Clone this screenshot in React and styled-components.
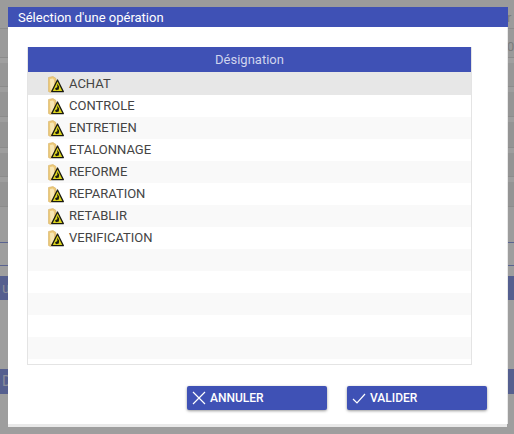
import React from 'react';
import styled, { createGlobalStyle } from 'styled-components';

const GlobalStyle = createGlobalStyle`
  html, body {
    margin: 0;
    padding: 0;
    height: 100%;
    background: #9e9e9e;
    font-family: Roboto, "Liberation Sans", sans-serif;
    overflow: hidden;
  }
`;

const operations = ['ACHAT', 'CONTROLE', 'ENTRETIEN', 'ETALONNAGE', 'REFORME', 'REPARATION', 'RETABLIR', 'VERIFICATION'];
const EMPTY_ROWS = 5;

const backdropRows = [
  { h: 29, bg: '#9b9b9b', right: 'r' },
  { h: 29, bg: '#9a9a9a', right: '0' },
  { h: 29, bg: '#979797', strip: '#a0a0a0' },
  { h: 30, bg: '#959595', strip: '#9e9e9e' },
  { h: 31, bg: '#949494', strip: '#9e9e9e' },
  { h: 29, bg: '#949494', strip: '#9e9e9e' },
  { h: 30, bg: '#949494', strip: '#9e9e9e' },
  { h: 36, bg: '#9c9c9c', line: '#5a6390' },
  { h: 23, bg: '#9e9e9e', line: '#5a6390' },
  { h: 10, bg: '#9e9e9e', line: '#9e9e9e' },
  { h: 24, bg: '#555f8f', line: '#555f8f', left: 'u' },
  { h: 69, bg: '#9e9e9e', line: '#9e9e9e' },
  { h: 25, bg: '#555f8f', line: '#555f8f', left: 'D' },
];

const Page = styled.div`
  position: relative;
  width: 514px;
  height: 434px;
  overflow: hidden;
`;

const Backdrop = styled.div`
  display: flex;
  flex-direction: column;
`;

const BackdropRow = styled.div`
  display: flex;
  align-items: center;
  justify-content: space-between;
  box-sizing: border-box;
  height: ${p => p.$h}px;
  background: ${p => p.$bg};
  border-top: ${p => (p.$strip ? `5px solid ${p.$strip}` : '0')};
  border-bottom: 1px solid ${p => p.$line || '#8c8c8c'};
  color: #8a8d99;
  font-size: 14px;
  padding: 0 0 0 2px;
`;

const RightCell = styled.span`
  color: #7c7c7c;
  font-size: 13px;
  width: 7px;
  padding-top: 6px;
`;

const Dialog = styled.div`
  position: absolute;
  top: 7px;
  left: 8px;
  width: 499px;
  height: 417px;
  background: #fff;
  box-shadow: 0 3px 0 #e9e9e9, 1px 0 0 #e9e9e9;
  display: flex;
  flex-direction: column;
`;

const TitleBar = styled.div`
  height: 20px;
  width: 500px;
  flex: none;
  background: #3f51b5;
  color: #fff;
  font-size: 13px;
  line-height: 21px;
  padding-left: 10px;
  box-sizing: border-box;
`;

const Content = styled.div`
  flex: 1;
  display: flex;
  flex-direction: column;
  padding: 20px 20px 14px 19px;
`;

const Table = styled.div`
  width: 445px;
  height: 318px;
  box-sizing: border-box;
  border: 1px solid #e4e4e4;
  border-top: 0;
  display: flex;
  flex-direction: column;
  overflow: hidden;
`;

const TableHead = styled.div`
  height: 25px;
  flex: none;
  background: #3f51b5;
  color: #cfd4ee;
  font-size: 13px;
  line-height: 25px;
  text-align: center;
`;

const Row = styled.div`
  height: ${p => (p.$selected ? 23 : 22)}px;
  flex: none;
  display: flex;
  align-items: center;
  gap: 5px;
  padding-left: 20px;
  padding-top: ${p => (p.$selected ? 1 : 0)}px;
  box-sizing: border-box;
  background: ${p => (p.$selected ? '#e7e7e7' : p.$odd ? '#f9f9f9' : '#fff')};
  color: #444;
  font-size: 13px;
`;

const RowLabel = styled.span`
  margin-bottom: 2px;
`;

const Actions = styled.div`
  margin-top: 21px;
  display: flex;
  justify-content: flex-end;
  gap: 20px;
`;

const Button = styled.button`
  width: 140px;
  height: 24px;
  display: flex;
  align-items: center;
  gap: 4px;
  padding: 0 0 0 5px;
  border: 0;
  border-radius: 2px;
  background: #3f51b5;
  color: #fff;
  font-family: inherit;
  font-size: 12px;
  font-weight: 500;
  box-shadow: 0 1px 3px rgba(0, 0, 0, 0.4);
`;

const FolderWarning = () => (
  <svg width="16" height="17" viewBox="0 0 16 17">
    <path d="M0.5 1.5 L5 0.5 L8 2.5 L8 13 L2.5 16.5 L0.5 15.5 Z" fill="#ecc878" stroke="#d6b468" strokeWidth="0.6" />
    <path d="M2 3 L5 2.5 L6 4 L6 12 L2.5 14.5 Z" fill="#f7e6b4" />
    <path d="M9.5 4 L15.3 15.6 L3.7 15.6 Z" fill="#dcd41c" stroke="#1a1a10" strokeWidth="1.3" strokeLinejoin="round" />
    <path d="M9 7.8 L11.2 10.6 L10.8 13.6 L8 14.2 L7 12.4 L9.4 11 Z" fill="#1c1c10" />
  </svg>
);

const CloseIcon = () => (
  <svg width="14" height="14" viewBox="0 0 14 14" fill="none" stroke="#fff" strokeWidth="1.2">
    <path d="M1 1 L13 13 M13 1 L1 13" />
  </svg>
);

const CheckIcon = () => (
  <svg width="14" height="14" viewBox="0 0 14 14" fill="none" stroke="#fff" strokeWidth="1.2">
    <path d="M1 8 L5 12 L13 3" />
  </svg>
);

export default function App() {
  return (
    <Page>
      <GlobalStyle />
      <Backdrop>
        {backdropRows.map((r, i) => (
          <BackdropRow key={i} $h={r.h} $bg={r.bg} $line={r.line} $strip={r.strip}>
            <span>{r.left}</span>
            <RightCell>{r.right}</RightCell>
          </BackdropRow>
        ))}
      </Backdrop>
      <Dialog>
        <TitleBar>Sélection d'une opération</TitleBar>
        <Content>
          <Table>
            <TableHead>Désignation</TableHead>
            {operations.map((op, i) => (
              <Row key={op} $selected={i === 0} $odd={i % 2 === 0}>
                <FolderWarning />
                <RowLabel>{op}</RowLabel>
              </Row>
            ))}
            {Array.from({ length: EMPTY_ROWS }).map((_, i) => (
              <Row key={i} $odd={i % 2 === 0} />
            ))}
          </Table>
          <Actions>
            <Button><CloseIcon />ANNULER</Button>
            <Button><CheckIcon />VALIDER</Button>
          </Actions>
        </Content>
      </Dialog>
    </Page>
  );
}
